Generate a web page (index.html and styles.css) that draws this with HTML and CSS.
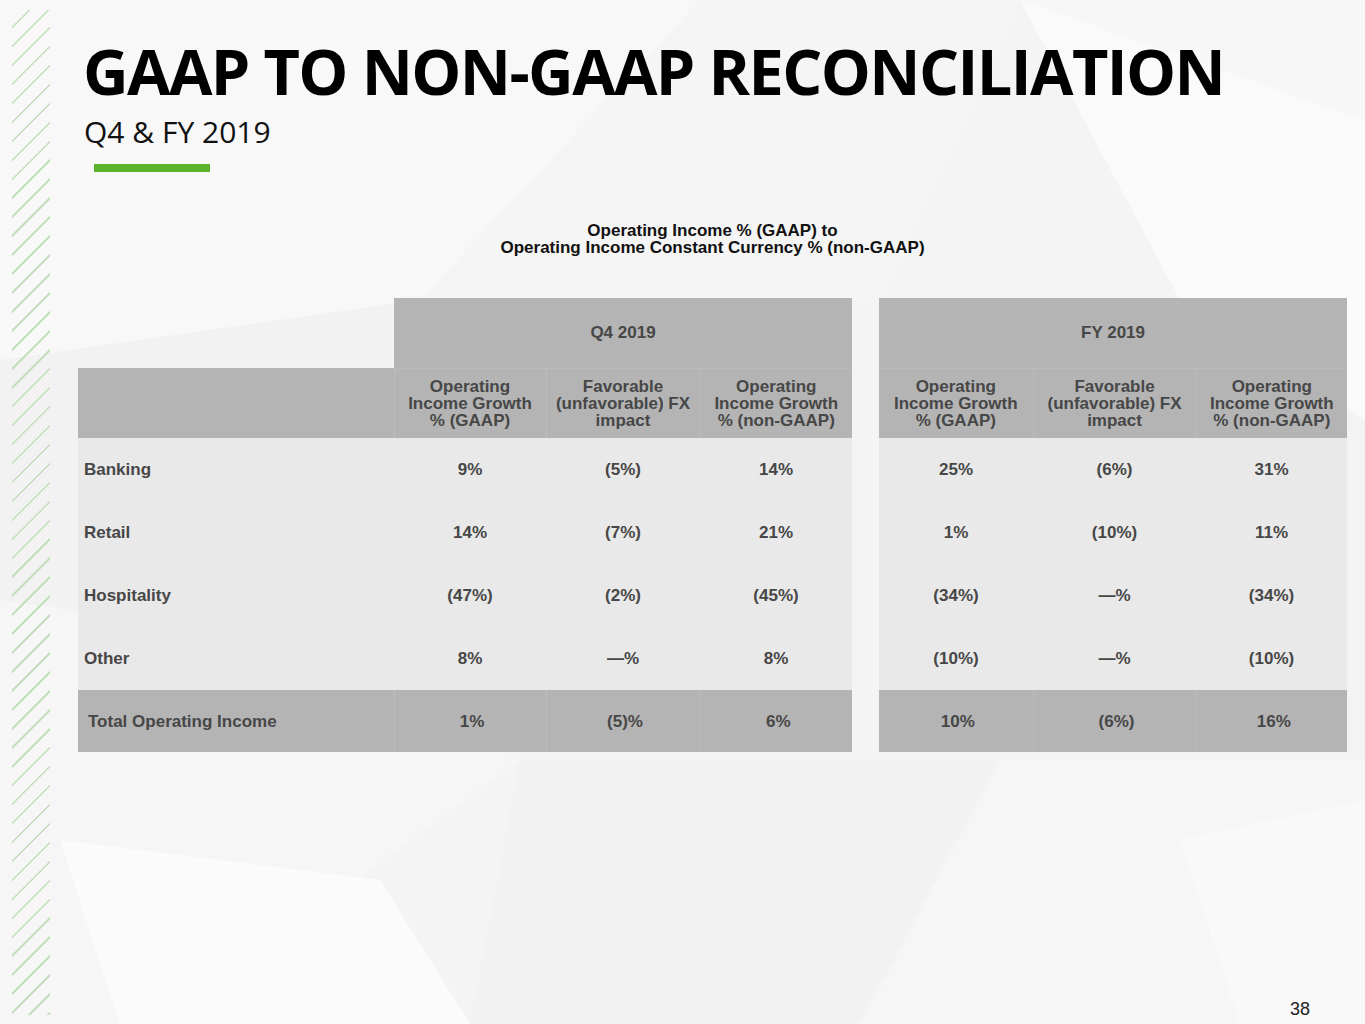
FILE: index.html
```html
<!DOCTYPE html>
<html lang="en">
<head>
<meta charset="utf-8">
<title>GAAP to Non-GAAP Reconciliation</title>
<link rel="stylesheet" href="styles.css">
</head>
<body>
<div class="slide">
  <svg class="bg" width="1365" height="1024" viewBox="0 0 1365 1024" aria-hidden="true">
    <rect x="0" y="0" width="1365" height="1024" fill="#f4f4f4"/>
    <polygon points="0,0 700,0 420,300 0,360" fill="#f8f8f8"/>
    <polygon points="700,0 1365,0 1365,120 1020,0" fill="#f7f7f7"/>
    <polygon points="1020,0 1365,120 1365,420 1180,300" fill="#fafafa"/>
    <polygon points="420,300 700,0 1020,0 880,300" fill="#f5f5f5"/>
    <polygon points="0,360 420,300 300,640 0,600" fill="#f2f2f2"/>
    <polygon points="880,300 1180,300 1365,420 1365,760 1000,760" fill="#f3f3f3"/>
    <polygon points="0,600 300,640 520,760 160,1024 0,1024" fill="#f6f6f6"/>
    <polygon points="60,840 380,880 470,1024 120,1024" fill="#fbfbfb"/>
    <polygon points="520,760 1000,760 860,1024 470,1024" fill="#f2f2f2"/>
    <polygon points="1000,760 1365,760 1365,1024 860,1024" fill="#f6f6f6"/>
    <polygon points="1180,840 1365,800 1365,1024 1240,1024" fill="#f9f9f9"/>
  </svg>
  <div class="stripes"></div>
  <main class="content">
    <h1 class="title">GAAP TO NON-GAAP RECONCILIATION</h1>
    <p class="subtitle">Q4 &amp; FY 2019</p>
    <div class="accent"></div>
    <h2 class="chart-title">Operating Income % (GAAP) to<br>Operating Income Constant Currency % (non-GAAP)</h2>
    <div class="tables">
      <table class="tbl tbl-q4">
        <colgroup>
          <col class="c-label"><col class="c-q1"><col class="c-q2"><col class="c-q3">
        </colgroup>
        <tr class="group-row">
          <td class="blank"></td>
          <td class="group" colspan="3">Q4 2019</td>
        </tr>
        <tr class="head-row">
          <td class="label"></td>
          <td class="sep">Operating<br>Income Growth<br>% (GAAP)</td>
          <td class="sep">Favorable<br>(unfavorable) FX<br>impact</td>
          <td class="sep">Operating<br>Income Growth<br>% (non-GAAP)</td>
        </tr>
        <tr class="body-row"><td class="label">Banking</td><td>9%</td><td>(5%)</td><td>14%</td></tr>
        <tr class="body-row"><td class="label">Retail</td><td>14%</td><td>(7%)</td><td>21%</td></tr>
        <tr class="body-row"><td class="label">Hospitality</td><td>(47%)</td><td>(2%)</td><td>(45%)</td></tr>
        <tr class="body-row"><td class="label">Other</td><td>8%</td><td>—%</td><td>8%</td></tr>
        <tr class="total-row"><td class="label total-label">Total Operating Income</td><td class="sep">1%</td><td class="sep">(5)%</td><td class="sep">6%</td></tr>
      </table>
      <table class="tbl tbl-fy">
        <colgroup>
          <col class="c-f1"><col class="c-f2"><col class="c-f3">
        </colgroup>
        <tr class="group-row">
          <td class="group" colspan="3">FY 2019</td>
        </tr>
        <tr class="head-row">
          <td>Operating<br>Income Growth<br>% (GAAP)</td>
          <td class="sep">Favorable<br>(unfavorable) FX<br>impact</td>
          <td class="sep">Operating<br>Income Growth<br>% (non-GAAP)</td>
        </tr>
        <tr class="body-row"><td>25%</td><td>(6%)</td><td>31%</td></tr>
        <tr class="body-row"><td>1%</td><td>(10%)</td><td>11%</td></tr>
        <tr class="body-row"><td>(34%)</td><td>—%</td><td>(34%)</td></tr>
        <tr class="body-row"><td>(10%)</td><td>—%</td><td>(10%)</td></tr>
        <tr class="total-row"><td>10%</td><td class="sep">(6%)</td><td class="sep">16%</td></tr>
      </table>
    </div>
    <div class="page-num">38</div>
  </main>
</div>
</body>
</html>
```

FILE: styles.css
```css
* { box-sizing: border-box; }
html, body { margin: 0; padding: 0; }
body { background: #f4f4f4; }

.slide {
  position: relative;
  width: 1365px;
  height: 1024px;
  overflow: hidden;
  display: flex;
  flex-direction: row;
}

.bg {
  position: absolute;
  left: 0;
  top: 0;
  z-index: 0;
}

.stripes {
  position: relative;
  z-index: 1;
  flex: 0 0 38px;
  width: 38px;
  height: 1005px;
  margin: 10px 0 0 12px;
  background: repeating-linear-gradient(135deg,
    transparent 0px,
    transparent 11.6px,
    #c4dfbe 11.6px,
    #c4dfbe 13.4px);
}

.content {
  position: relative;
  z-index: 1;
  flex: 1 1 auto;
  margin-left: 28px;
  display: flex;
  flex-direction: column;
  height: 1024px;
}

.title {
  margin: 39px 0 0 5px;
  font-family: "Open Sans", "Noto Sans", sans-serif;
  font-weight: 700;
  font-size: 63px;
  line-height: 63px;
  color: #000;
  letter-spacing: -1.6px;
  white-space: nowrap;
}

.subtitle {
  margin: 15px 0 0 6px;
  font-family: "Open Sans", "Noto Sans", sans-serif;
  font-weight: 400;
  font-size: 30px;
  line-height: 30px;
  color: #111;
}

.accent {
  margin: 17px 0 0 16px;
  width: 116px;
  height: 8px;
  background: #5ab52c;
}

.chart-title {
  margin: 50px 0 0 0;
  width: 1269px;
  text-align: center;
  font-family: "Liberation Sans", Arial, sans-serif;
  font-weight: 700;
  font-size: 17px;
  line-height: 17px;
  color: #111;
}

.tables {
  margin-top: 42px;
  display: flex;
  flex-direction: row;
  gap: 27px;
}

.tbl {
  border-collapse: collapse;
  border-spacing: 0;
  table-layout: fixed;
  font-family: "Liberation Sans", Arial, sans-serif;
  font-weight: 700;
  font-size: 17px;
  line-height: 17px;
  color: #474747;
}
.tbl-q4 { width: 774px; }
.tbl-fy { width: 468px; }

.c-label { width: 316px; }
.c-q1 { width: 152px; }
.c-q2 { width: 154px; }
.c-q3 { width: 152px; }
.c-f1 { width: 154px; }
.c-f2 { width: 163px; }
.c-f3 { width: 151px; }

.tbl td {
  padding: 0;
  text-align: center;
  vertical-align: middle;
}

.group-row td { height: 70px; }
.group-row .blank { background: transparent; }
.group-row .group { background: #b4b4b4; }

.head-row td {
  height: 70px;
  background: #b4b4b4;
  border-top: 1px solid #bbbbbb;
}
.head-row td.label { border-top: none; }

.body-row td {
  height: 63px;
  background: #e9e9e9;
}

.total-row td {
  height: 62px;
  background: #b4b4b4;
  padding-left: 4px;
}

.tbl td.sep { border-left: 1px solid #bcbcbc; }

.tbl td.label {
  text-align: left;
  padding-left: 6px;
}
.tbl td.total-label { padding-left: 10px; }

.page-num {
  margin-top: auto;
  margin-bottom: 3px;
  align-self: flex-end;
  margin-right: 55px;
  font-family: "Liberation Sans", Arial, sans-serif;
  font-size: 18px;
  line-height: 24px;
  color: #222;
}
```
